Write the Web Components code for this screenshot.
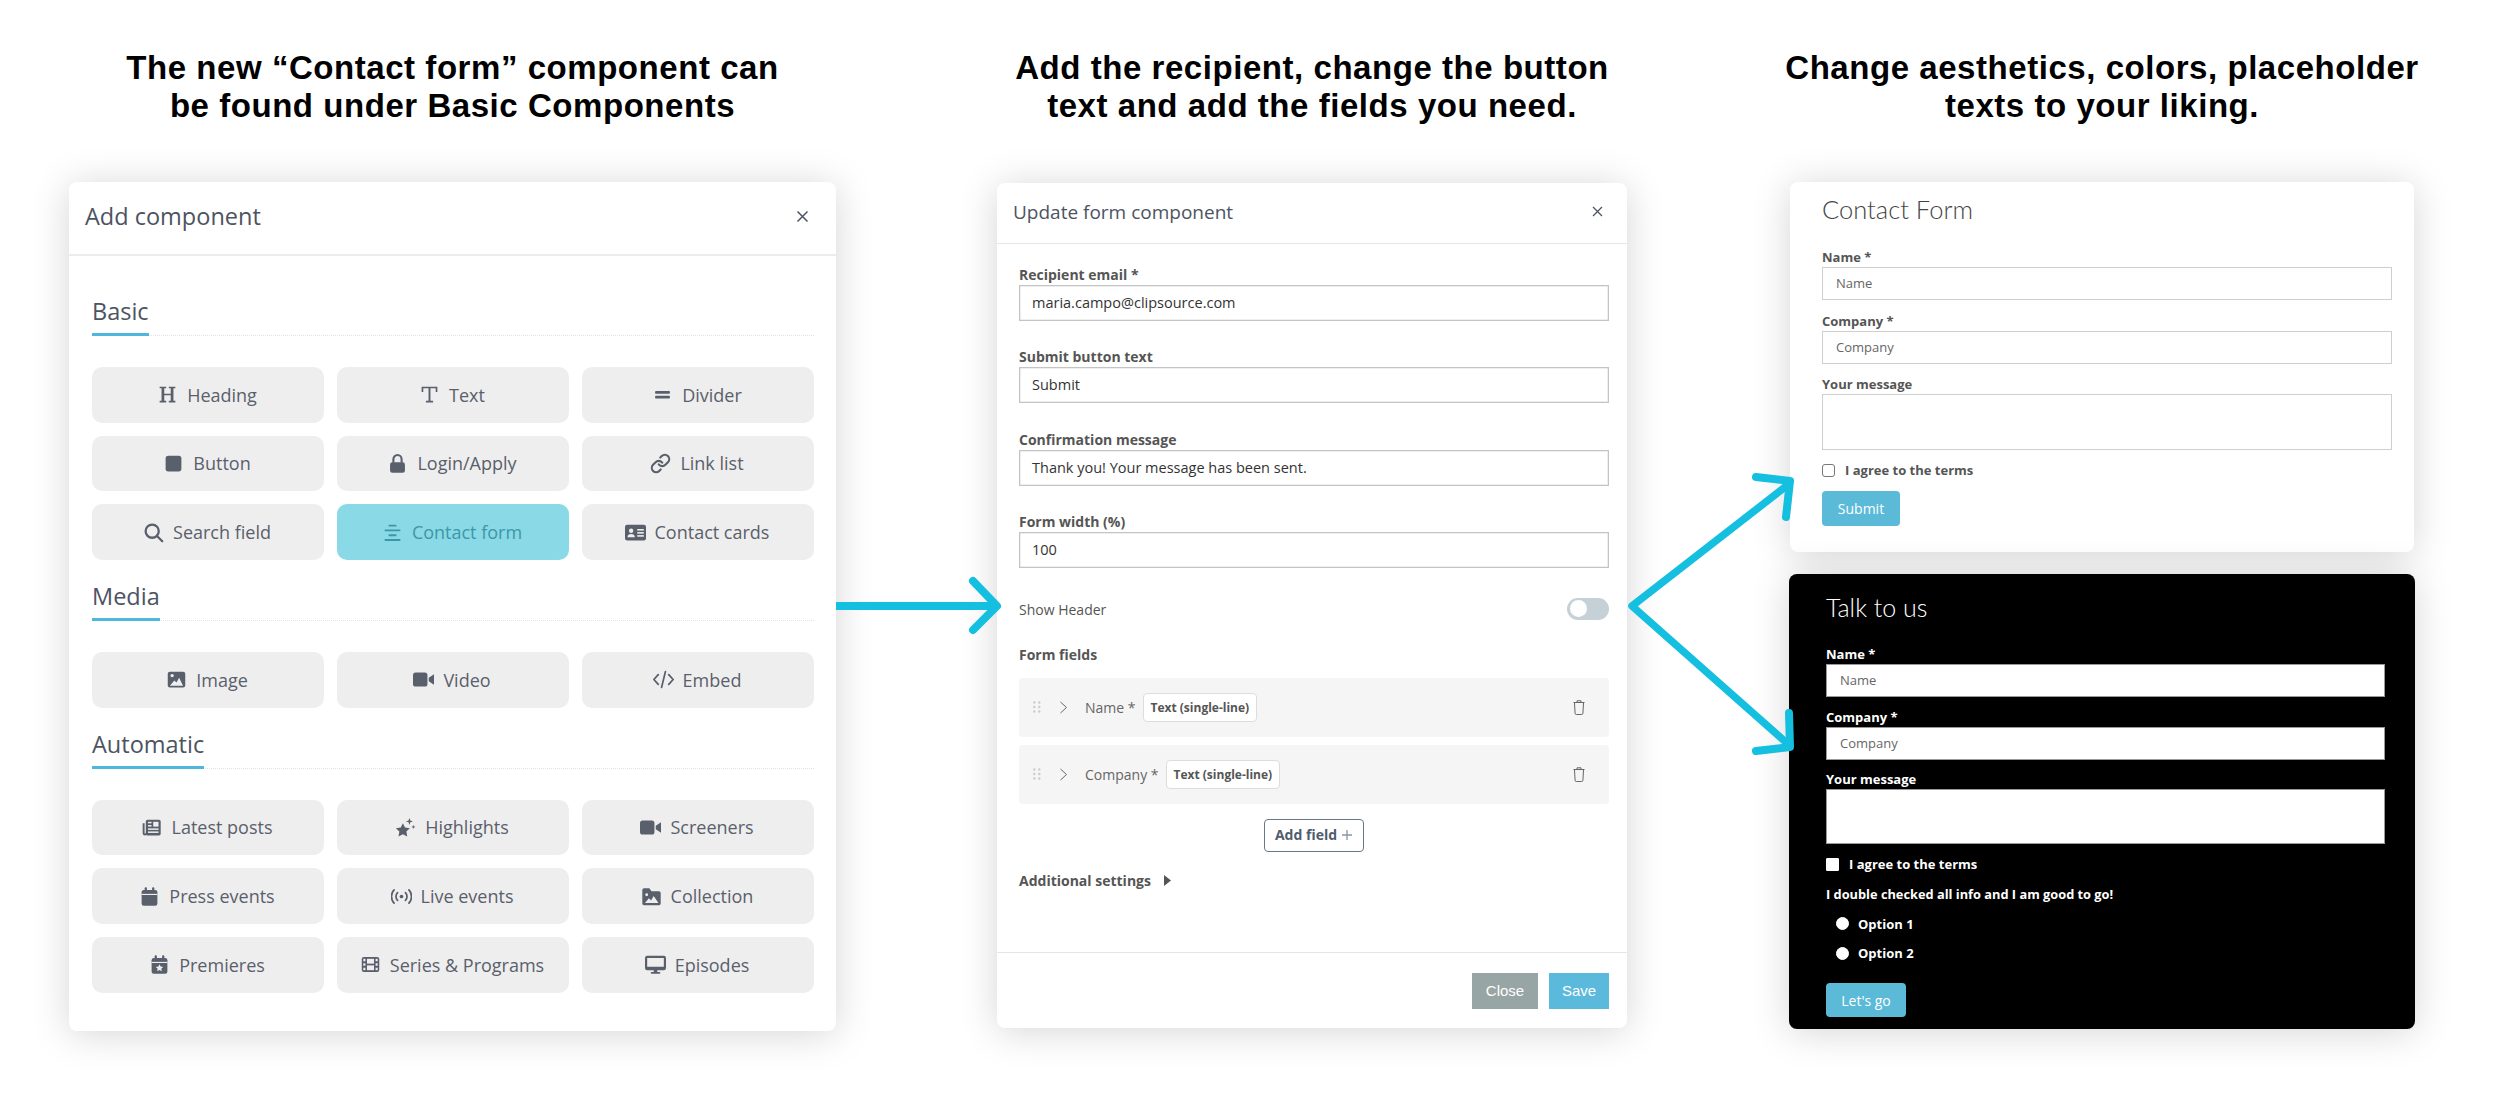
<!DOCTYPE html>
<html lang="en">
<head>
<meta charset="utf-8">
<title>Contact form component</title>
<style>
html, body { margin: 0; background: #fff; font-family: "Open Sans", "Liberation Sans", sans-serif; }
</style>
</head>
<body>
<flow-page>
  <flow-column style="--col-width: 767px; --col-gap: 69px">
    <span slot="heading">The new “Contact form” component can<br>be found under Basic Components</span>
    <picker-panel heading="Add component">
      <tile-section heading="Basic">
        <component-tile icon="heading">Heading</component-tile>
        <component-tile icon="text">Text</component-tile>
        <component-tile icon="divider">Divider</component-tile>
        <component-tile icon="button">Button</component-tile>
        <component-tile icon="lock">Login/Apply</component-tile>
        <component-tile icon="link">Link list</component-tile>
        <component-tile icon="search">Search field</component-tile>
        <component-tile icon="lines" active>Contact form</component-tile>
        <component-tile icon="idcard">Contact cards</component-tile>
      </tile-section>
      <tile-section heading="Media">
        <component-tile icon="image">Image</component-tile>
        <component-tile icon="video">Video</component-tile>
        <component-tile icon="code">Embed</component-tile>
      </tile-section>
      <tile-section heading="Automatic">
        <component-tile icon="news">Latest posts</component-tile>
        <component-tile icon="stars">Highlights</component-tile>
        <component-tile icon="video">Screeners</component-tile>
        <component-tile icon="calendar">Press events</component-tile>
        <component-tile icon="live">Live events</component-tile>
        <component-tile icon="folder">Collection</component-tile>
        <component-tile icon="premiere">Premieres</component-tile>
        <component-tile icon="film">Series &amp; Programs</component-tile>
        <component-tile icon="desktop">Episodes</component-tile>
      </tile-section>
    </picker-panel>
  </flow-column>

  <flow-column style="--col-width: 630px; --col-gap: 161px">
    <span slot="heading">Add the recipient, change the button<br>text and add the fields you need.</span>
    <update-panel heading="Update form component">
      <setting-field label="Recipient email *">maria.campo@clipsource.com</setting-field>
      <setting-field label="Submit button text">Submit</setting-field>
      <setting-field label="Confirmation message">Thank you! Your message has been sent.</setting-field>
      <setting-field label="Form width (%)">100</setting-field>
      <toggle-row>Show Header</toggle-row>
      <field-list label="Form fields">
        <field-row kind="Text (single-line)">Name *</field-row>
        <field-row kind="Text (single-line)">Company *</field-row>
      </field-list>
    </update-panel>
  </flow-column>

  <flow-column style="--col-width: 624px; --col-gap: 163px">
    <span slot="heading">Change aesthetics, colors, placeholder<br>texts to your liking.</span>
    <contact-form heading="Contact Form" submit="Submit">
      <form-input label="Name *" placeholder="Name"></form-input>
      <form-input label="Company *" placeholder="Company"></form-input>
      <form-input label="Your message" area></form-input>
      <form-choice slot="choices" kind="check">I agree to the terms</form-choice>
    </contact-form>
    <contact-form dark heading="Talk to us" submit="Let's go">
      <form-input label="Name *" placeholder="Name"></form-input>
      <form-input label="Company *" placeholder="Company"></form-input>
      <form-input label="Your message" area></form-input>
      <form-choice slot="choices" kind="check">I agree to the terms</form-choice>
      <form-choice slot="choices" kind="note">I double checked all info and I am good to go!</form-choice>
      <form-choice slot="choices" kind="radio">Option 1</form-choice>
      <form-choice slot="choices" kind="radio">Option 2</form-choice>
    </contact-form>
  </flow-column>

  <flow-arrows></flow-arrows>
</flow-page>

<script>
const ICONS = {
  heading: `<path d="M3 3h7.500v1.800H8.300v6.200h7.400V4.800h-2.200V3H21v1.800h-2.200v14.400H21V21h-7.500v-1.800h2.200v-6.400H8.300v6.400h2.200V21H3v-1.800h2.200V4.800H3z"/>`,
  text: `<path d="M3 3h18v6h-1.900V4.900h-6v14.300h3V21H7.900v-1.800h3V4.900h-6V9H3z"/>`,
  divider: `<rect x="3.500" y="8" width="17" height="3" rx="1"/><rect x="3.500" y="13.500" width="17" height="3" rx="1"/>`,
  button: `<rect x="3" y="3" width="18" height="18" rx="3"/>`,
  lock: `<rect x="3.500" y="10.500" width="17" height="12" rx="2.500"/><path d="M7.300 11V7a4.700 4.700 0 0 1 9.400 0v4" fill="none" stroke="currentColor" stroke-width="2.400"/>`,
  link: `<g fill="none" stroke="currentColor" stroke-width="2.400" stroke-linecap="round"><path d="M10 13a5 5 0 0 0 7.540.54l3-3a5 5 0 0 0-7.070-7.070l-1.720 1.710"/><path d="M14 11a5 5 0 0 0-7.540-.54l-3 3a5 5 0 0 0 7.070 7.070l1.710-1.710"/></g>`,
  search: `<g fill="none" stroke="currentColor" stroke-width="2.600" stroke-linecap="round"><circle cx="10.500" cy="10.500" r="7.500"/><path d="M16 16l6 6"/></g>`,
  lines: `<rect x="7.500" y="3" width="9" height="2.200" rx=".6"/><rect x="3" y="8.500" width="18" height="2.200" rx=".6"/><rect x="7.500" y="14" width="9" height="2.200" rx=".6"/><rect x="3" y="19.500" width="18" height="2.200" rx=".6"/>`,
  idcard: `<rect x="0" y="3" width="24" height="18" rx="2.500"/><g fill="var(--cut)"><circle cx="7" cy="10" r="2.500"/><path d="M2.800 17.500c0-2.800 1.800-3.800 4.200-3.800s4.200 1 4.200 3.800z"/><rect x="14" y="8" width="7.500" height="1.800"/><rect x="14" y="11.500" width="7.500" height="1.800"/><rect x="14" y="15" width="7.500" height="1.800"/></g>`,
  image: `<rect x="2" y="3" width="20" height="18" rx="2.500"/><g fill="var(--cut)"><circle cx="7" cy="7.500" r="1.900"/><path d="M4.500 19l5-6 2.500 2.500 3-5.500 4.500 9z"/></g>`,
  video: `<rect x="0" y="4" width="16.500" height="16" rx="3"/><path d="M18 10l6-4v12l-6-4z"/>`,
  code: `<g fill="none" stroke="currentColor" stroke-width="2" stroke-linecap="round" stroke-linejoin="round"><path d="M6 6.500L1 12l5 5.500"/><path d="M18 6.500l5 5.500-5 5.500"/><path d="M14.200 3l-4.400 18"/></g>`,
  news: `<rect x="5.500" y="3" width="17" height="18" rx="2"/><path d="M3 7v11.500a1.500 1.500 0 0 0 3 0" fill="none" stroke="currentColor" stroke-width="2.200"/><g fill="var(--cut)"><rect x="14" y="5.500" width="6" height="5.500"/><rect x="8" y="5.500" width="4" height="1.700"/><rect x="8" y="9.200" width="4" height="1.700"/><rect x="8" y="13" width="12" height="1.700"/><rect x="8" y="16.500" width="12" height="1.700"/></g>`,
  stars: `<path d="M9 7l2.400 5 5.600.8-4 3.900 1 5.600-5-2.700-5 2.700 1-5.600-4-3.900 5.600-.8z"/><path d="M16.500 1l1 3 3 1-3 1-1 3-1-3-3-1 3-1z"/><path d="M21 9l.6 1.700 1.700.6-1.700.6-.6 1.700-.6-1.700-1.700-.6 1.700-.6z"/>`,
  calendar: `<rect x="3" y="4.500" width="18" height="18" rx="2.500"/><rect x="6.500" y="1.500" width="2.500" height="5" rx="1"/><rect x="15" y="1.500" width="2.500" height="5" rx="1"/><rect x="3" y="9" width="18" height="1.300" fill="var(--cut)"/>`,
  live: `<circle cx="12" cy="12" r="2.100"/><g fill="none" stroke="currentColor" stroke-width="2" stroke-linecap="round"><path d="M7.500 7.500a6.500 6.500 0 0 0 0 9"/><path d="M16.500 7.500a6.500 6.500 0 0 1 0 9"/><path d="M3.500 4.500a11 11 0 0 0 0 15"/><path d="M20.500 4.500a11 11 0 0 1 0 15"/></g>`,
  folder: `<path d="M1.500 4.500a2 2 0 0 1 2-2h6l2.500 3.500h8.500a2 2 0 0 1 2 2V20a2 2 0 0 1-2 2h-17a2 2 0 0 1-2-2z"/><g fill="var(--cut)"><circle cx="6.500" cy="10" r="1.600"/><path d="M4.500 19.500l4.500-5.500 2.500 2.500 3-5 5.500 8z"/></g>`,
  premiere: `<rect x="3" y="4.500" width="18" height="18" rx="2.500"/><rect x="6.500" y="1.500" width="2.500" height="5" rx="1"/><rect x="15" y="1.500" width="2.500" height="5" rx="1"/><rect x="3" y="9" width="18" height="1.300" fill="var(--cut)"/><path fill="var(--cut)" d="M12 11.800l1.300 2.600 2.900.4-2.100 2 .5 2.900-2.600-1.400-2.600 1.400.5-2.900-2.100-2 2.900-.4z"/>`,
  film: `<rect x="2" y="3.500" width="20" height="17" rx="2.500"/><g fill="var(--cut)"><rect x="3.800" y="5.500" width="2.400" height="2.800"/><rect x="3.800" y="10.600" width="2.400" height="2.800"/><rect x="3.800" y="15.700" width="2.400" height="2.800"/><rect x="17.800" y="5.500" width="2.400" height="2.800"/><rect x="17.800" y="10.600" width="2.400" height="2.800"/><rect x="17.800" y="15.700" width="2.400" height="2.800"/><rect x="8" y="5.500" width="8" height="5.500"/><rect x="8" y="13" width="8" height="5.500"/></g>`,
  desktop: `<path fill-rule="evenodd" d="M2.500 2h19A2.500 2.500 0 0 1 24 4.500v11.500a2.500 2.500 0 0 1-2.500 2.500h-19A2.500 2.500 0 0 1 0 16V4.500A2.500 2.500 0 0 1 2.500 2zM2.500 4.500v10h19v-10z"/><rect x="10" y="18" width="4" height="3"/><rect x="6.500" y="20.500" width="11" height="2" rx="1"/>`
};

class FlowPage extends HTMLElement {
  constructor() {
    super();
    this.attachShadow({ mode: "open" });
    this.shadowRoot.innerHTML = `
      <style>
        :host { display: flex; position: relative; align-items: flex-start; width: 2500px; height: 1113px; overflow: hidden; background: #fff; }
      </style>
      <slot></slot>`;
  }
}

class FlowColumn extends HTMLElement {
  constructor() {
    super();
    this.attachShadow({ mode: "open" });
    this.shadowRoot.innerHTML = `
      <style>
        :host { display: flex; flex-direction: column; flex: none; width: var(--col-width); margin-left: var(--col-gap); padding-top: 49px; }
        h2 { display: flex; justify-content: center; height: 76px; margin: 0 0 57px; font: 700 33px/38px "Liberation Sans", Arial, sans-serif; letter-spacing: .55px; color: #000; text-align: center; white-space: nowrap; }
        .panels { display: flex; flex-direction: column; gap: 22px; }
      </style>
      <h2><slot name="heading"></slot></h2>
      <div class="panels"><slot></slot></div>`;
  }
}

class PickerPanel extends HTMLElement {
  constructor() {
    super();
    this.attachShadow({ mode: "open" });
    this.shadowRoot.innerHTML = `
      <style>
        :host { display: block; background: #fff; border-radius: 8px; box-shadow: 0 3px 38px rgba(0,0,0,.17); color: #4d5361; }
        header { display: flex; align-items: center; justify-content: space-between; box-sizing: border-box; height: 74px; padding: 0 27px 4px 16px; border-bottom: 2px solid #ececec; }
        h3 { margin: 0; font: 400 23.500px/32px "Open Sans", sans-serif; }
        svg { width: 13px; height: 13px; stroke: #4d5361; stroke-width: 1.500; fill: none; }
        .body { padding: 39px 22px 18px 23px; }
      </style>
      <header><h3></h3><svg viewBox="0 0 13 13"><path d="M1.500 1.500l10 10M11.500 1.500l-10 10"/></svg></header>
      <div class="body"><slot></slot></div>`;
    this.shadowRoot.querySelector("h3").textContent = this.getAttribute("heading");
  }
}

class TileSection extends HTMLElement {
  constructor() {
    super();
    this.attachShadow({ mode: "open" });
    this.shadowRoot.innerHTML = `
      <style>
        :host { display: block; margin-bottom: 20px; }
        .head { display: flex; height: 40px; margin-bottom: 31px; border-bottom: 1px dotted #e2e2e2; }
        h4 { height: 38px; margin: 0 0 -1px; border-bottom: 3px solid #4db8dc; font: 400 23.500px/32px "Open Sans", sans-serif; color: #4d5361; }
        .grid { display: grid; grid-template-columns: repeat(3, 1fr); gap: 13px; }
      </style>
      <div class="head"><h4></h4></div>
      <div class="grid"><slot></slot></div>`;
    this.shadowRoot.querySelector("h4").textContent = this.getAttribute("heading");
  }
}

class ComponentTile extends HTMLElement {
  constructor() {
    super();
    this.attachShadow({ mode: "open" });
    this.shadowRoot.innerHTML = `
      <style>
        :host { display: flex; align-items: center; justify-content: center; gap: 9px; height: 55.670px; border-radius: 10px; background: #eee; color: #5a5f6c; font: 400 18px/24px "Open Sans", sans-serif; --cut: #eee; }
        :host([active]) { background: #8ad9e6; color: #3d97a7; }
        svg { width: 21px; height: 21px; margin-left: -2px; fill: currentColor; flex: none; }
      </style>
      <svg viewBox="0 0 24 24">${ICONS[this.getAttribute("icon")]}</svg>
      <span><slot></slot></span>`;
  }
}

class UpdatePanel extends HTMLElement {
  constructor() {
    super();
    this.attachShadow({ mode: "open" });
    this.shadowRoot.innerHTML = `
      <style>
        :host { display: block; margin-top: 1px; background: #fff; border-radius: 8px; box-shadow: 0 3px 38px rgba(0,0,0,.17); color: #555; }
        header { display: flex; align-items: center; justify-content: space-between; height: 57px; padding: 0 24px 3px 16px; border-bottom: 1px solid #e6e6e6; }
        h3 { margin: 0; font: 400 19px/26px "Open Sans", sans-serif; color: #4d5361; }
        .close { width: 11px; height: 11px; stroke: #4d5361; stroke-width: 1.300; fill: none; }
        .body { padding: 21px 18px 61px 22px; }
        .add { display: flex; align-items: center; justify-content: center; gap: 4px; box-sizing: border-box; width: 100px; height: 33px; margin: 15px auto 0; border: 1.500px solid #6a778a; border-radius: 4px; font: 700 14px/20px "Open Sans", sans-serif; color: #4f5b6e; }
        .add svg { width: 12px; height: 12px; stroke: #8c95a3; stroke-width: 1.300; fill: none; }
        .more { display: flex; align-items: center; gap: 13px; margin-top: 19px; font: 700 14px/20px "Open Sans", sans-serif; }
        .more svg { width: 7px; height: 11px; fill: #555; }
        footer { display: flex; justify-content: flex-end; gap: 11px; padding: 20px 18px 19px; border-top: 1px solid #e6e6e6; font: 400 15px/36px "Liberation Sans", sans-serif; color: #fff; }
        footer span { height: 36px; text-align: center; }
        .grey { width: 66px; background: #97a5a5; }
        .blue { width: 60px; background: #5bbadb; }
      </style>
      <header>
        <h3></h3>
        <svg class="close" viewBox="0 0 11 11"><path d="M1 1l9 9M10 1l-9 9"/></svg>
      </header>
      <div class="body">
        <slot></slot>
        <div class="add">Add field <svg viewBox="0 0 12 12"><path d="M6 1v10M1 6h10"/></svg></div>
        <div class="more">Additional settings <svg viewBox="0 0 7 11"><path d="M0 0l7 5.500L0 11z"/></svg></div>
      </div>
      <footer><span class="grey">Close</span><span class="blue">Save</span></footer>`;
    this.shadowRoot.querySelector("h3").textContent = this.getAttribute("heading");
  }
}

class SettingField extends HTMLElement {
  constructor() {
    super();
    this.attachShadow({ mode: "open" });
    this.shadowRoot.innerHTML = `
      <style>
        :host { display: block; margin-bottom: 26.330px; }
        label { display: block; font: 700 14px/20px "Open Sans", sans-serif; color: #555; }
        div { box-sizing: border-box; height: 36px; padding: 0 12px; border: 1px solid #c4c4c4; box-shadow: inset 0 0 0 .5px #ddd; font: 400 14.500px/34px "Open Sans", sans-serif; color: #333; }
      </style>
      <label></label>
      <div><slot></slot></div>`;
    this.shadowRoot.querySelector("label").textContent = this.getAttribute("label");
  }
}

class ToggleRow extends HTMLElement {
  constructor() {
    super();
    this.attachShadow({ mode: "open" });
    this.shadowRoot.innerHTML = `
      <style>
        :host { display: flex; align-items: center; justify-content: space-between; height: 22px; margin-top: 30px; font: 400 14px/22px "Open Sans", sans-serif; color: #555; }
        span { padding-top: 3px; }
        .track { display: flex; align-items: center; box-sizing: border-box; width: 42px; height: 22px; padding: 0 3px; border-radius: 11px; background: #c6d1d7; }
        .knob { width: 17px; height: 17px; border-radius: 50%; background: #fff; }
      </style>
      <span><slot></slot></span>
      <div class="track"><div class="knob"></div></div>`;
  }
}

class FieldList extends HTMLElement {
  constructor() {
    super();
    this.attachShadow({ mode: "open" });
    this.shadowRoot.innerHTML = `
      <style>
        :host { display: block; margin-top: 25px; }
        label { display: block; margin-bottom: 13px; font: 700 14px/20px "Open Sans", sans-serif; color: #555; }
        div { display: flex; flex-direction: column; gap: 8px; }
      </style>
      <label></label>
      <div><slot></slot></div>`;
    this.shadowRoot.querySelector("label").textContent = this.getAttribute("label");
  }
}

class FieldRow extends HTMLElement {
  constructor() {
    super();
    this.attachShadow({ mode: "open" });
    this.shadowRoot.innerHTML = `
      <style>
        :host { display: flex; align-items: center; height: 59px; padding: 0 24px 0 14px; border-radius: 4px; background: #f5f5f5; font: 400 14px/20px "Open Sans", sans-serif; color: #666; }
        .dots { width: 8px; height: 12px; fill: #ccc; }
        .chevron { width: 7px; height: 13px; margin: 0 18px 0 19px; stroke: #666; stroke-width: 1; fill: none; }
        .name { padding-top: 2px; }
        .kind { margin-left: 7px; padding: 0 7px; height: 27px; border: 1px solid #ddd; border-radius: 4px; background: #fff; font: 700 12px/27px "Open Sans", sans-serif; color: #555; }
        .trash { width: 12px; height: 15px; margin-left: auto; stroke: #666; stroke-width: 1; fill: none; }
      </style>
      <svg class="dots" viewBox="0 0 8 12"><circle cx="1.300" cy="1.500" r="1.200"/><circle cx="6.300" cy="1.500" r="1.200"/><circle cx="1.300" cy="6" r="1.200"/><circle cx="6.300" cy="6" r="1.200"/><circle cx="1.300" cy="10.500" r="1.200"/><circle cx="6.300" cy="10.500" r="1.200"/></svg>
      <svg class="chevron" viewBox="0 0 7 13"><path d="M.5 1l6 5.500-6 5.500"/></svg>
      <span class="name"><slot></slot></span>
      <span class="kind"></span>
      <svg class="trash" viewBox="0 0 12 15"><path d="M1.500 3l.6 10.300a1.200 1.200 0 0 0 1.200 1.200h5.400a1.200 1.200 0 0 0 1.200-1.200L10.500 3M.5 2.500h11M4 2.500V.8h4v1.700"/></svg>`;
    this.shadowRoot.querySelector(".kind").textContent = this.getAttribute("kind");
  }
}

class ContactForm extends HTMLElement {
  constructor() {
    super();
    this.attachShadow({ mode: "open" });
    this.shadowRoot.innerHTML = `
      <style>
        :host { display: block; padding: 12px 22px 26px 32px; background: #fff; border-radius: 8px; box-shadow: 0 3px 38px rgba(0,0,0,.17); color: #555; --form-line: #cfcfcf; --box-line: #777; --box-fill: #fff; --box-radius: 3px; --field-gap: 10.500px; --area-height: 56px; }
        :host([dark]) { margin: 0 -1px; padding: 18px 30px 12px 37px; background: #000; color: #fff; --form-line: #999; --box-line: #fff; --box-radius: 1px; --field-gap: 9.500px; --area-height: 55px; }
        h3 { margin: 0 0 21px; font: 300 25.500px/30px Lato, "Open Sans", sans-serif; padding-bottom: 2px; color: #444; }
        :host([dark]) h3 { margin-bottom: 20px; font-size: 25px; color: #fff; }
        button { display: block; width: 78px; height: 35px; margin-top: 11px; padding: 0; border: 0; border-radius: 4px; background: #5bbad8; color: #fff; font: 400 14px/35px "Open Sans", sans-serif; }
        :host([dark]) button { width: 80px; height: 34px; margin-top: 20px; }
      </style>
      <h3></h3>
      <slot></slot>
      <slot name="choices"></slot>
      <button type="button"></button>`;
    this.shadowRoot.querySelector("h3").textContent = this.getAttribute("heading");
    this.shadowRoot.querySelector("button").textContent = this.getAttribute("submit");
  }
}

class FormInput extends HTMLElement {
  constructor() {
    super();
    this.attachShadow({ mode: "open" });
    this.shadowRoot.innerHTML = `
      <style>
        :host { display: block; margin-bottom: var(--field-gap); }
        label { display: block; font: 700 13px/20px "Open Sans", sans-serif; }
        div { box-sizing: border-box; height: 33px; padding: 0 13px; background: #fff; border: 1px solid var(--form-line); font: 400 13px/31px "Open Sans", sans-serif; color: #666; }
        :host([area]) { margin-bottom: 0; }
        :host([area]) div { height: var(--area-height); }
      </style>
      <label></label>
      <div></div>`;
    this.shadowRoot.querySelector("label").textContent = this.getAttribute("label");
    this.shadowRoot.querySelector("div").textContent = this.getAttribute("placeholder") || "";
  }
}

class FormChoice extends HTMLElement {
  constructor() {
    super();
    this.attachShadow({ mode: "open" });
    this.shadowRoot.innerHTML = `
      <style>
        :host { display: flex; align-items: center; gap: 10px; height: 20px; margin-top: 10px; font: 700 13px/20px "Open Sans", sans-serif; }
        .mark { box-sizing: border-box; width: 13px; height: 13px; flex: none; border: 1px solid var(--box-line); border-radius: var(--box-radius); background: var(--box-fill); }
        :host([kind="radio"]) { margin-left: 10px; margin-top: 9.500px; gap: 9px; }
        :host([kind="radio"]) .mark { border-radius: 50%; }
        :host([kind="note"]) { font-size: 12.800px; }
        :host([kind="note"]) .mark { display: none; }
      </style>
      <span class="mark"></span>
      <span><slot></slot></span>`;
  }
}

class FlowArrows extends HTMLElement {
  constructor() {
    super();
    this.attachShadow({ mode: "open" });
    this.shadowRoot.innerHTML = `
      <style>
        :host { position: absolute; left: 0; top: 0; width: 2500px; height: 1113px; pointer-events: none; }
        svg { display: block; width: 100%; height: 100%; fill: none; stroke: #14bfdf; stroke-linejoin: round; stroke-linecap: round; }
      </style>
      <svg viewBox="0 0 2500 1113">
        <path stroke-width="8" stroke-linecap="butt" d="M836 606H996"/>
        <path stroke-width="8" d="M973 581l24 25-24 24"/>
        <path stroke-width="7.500" d="M1789 484L1632 606 1789 745"/>
        <path stroke-width="8" d="M1756 477l34 4-4 36"/>
        <path stroke-width="8" d="M1789 713l1 34-34 4"/>
      </svg>`;
  }
}

customElements.define("flow-page", FlowPage);
customElements.define("flow-column", FlowColumn);
customElements.define("picker-panel", PickerPanel);
customElements.define("tile-section", TileSection);
customElements.define("component-tile", ComponentTile);
customElements.define("update-panel", UpdatePanel);
customElements.define("setting-field", SettingField);
customElements.define("toggle-row", ToggleRow);
customElements.define("field-list", FieldList);
customElements.define("field-row", FieldRow);
customElements.define("contact-form", ContactForm);
customElements.define("form-input", FormInput);
customElements.define("form-choice", FormChoice);
customElements.define("flow-arrows", FlowArrows);
</script>
</body>
</html>
